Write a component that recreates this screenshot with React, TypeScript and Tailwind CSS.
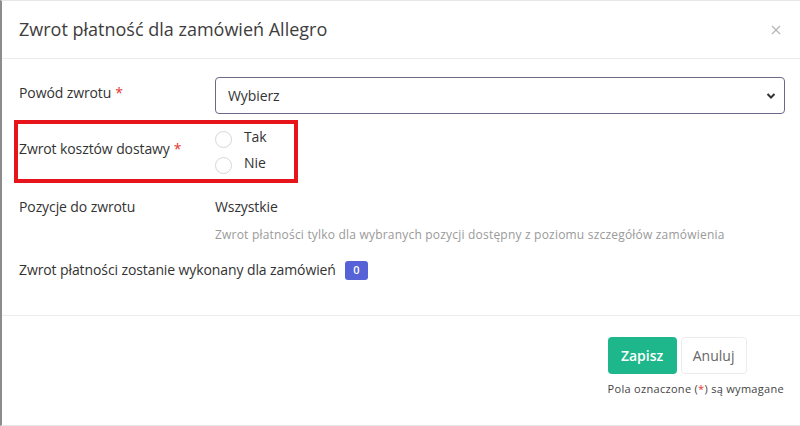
import React from "react";

function Req() {
  return <span className="text-[#e3342f] ml-1">*</span>;
}

function Radio({ label }: { label: string }) {
  return (
    <label className="flex items-center h-[26px]">
      <span className="w-[17px] h-[17px] rounded-full border border-[#d6d6d6] bg-white" />
      <span className="ml-[12px] -mt-[5px]">{label}</span>
    </label>
  );
}

export default function App() {
  return (
    <div
      className="relative w-[800px] h-[426px] bg-white border-l-2 border-l-[#8c8c8c] border-t border-t-[#e6e6e6] border-b border-b-[#e6e6e6] overflow-hidden"
      style={{ fontFamily: '"Open Sans", "Liberation Sans", sans-serif' }}
    >
      <div className="flex items-center justify-between h-[58px] pl-[17px] pr-[19px] border-b border-[#ececec]">
        <h1 className="text-[18px] font-medium text-[#3d3d3d]">
          Zwrot płatność dla zamówień Allegro
        </h1>
        <svg width="10" height="10" viewBox="0 0 10 10" className="mt-[1px]">
          <path d="M1 1L9 9M9 1L1 9" stroke="#b5b5b5" strokeWidth="1.2" />
        </svg>
      </div>

      <div className="pl-[17px] pr-[15px] pt-[18px] h-[257px] border-b border-[#ececec] text-[14px] leading-[20px] tracking-[-0.1px] text-[#333]">
        <div className="flex items-center h-[37px]">
          <div className="w-[196px] -mt-[5px]">
            Powód zwrotu<Req />
          </div>
          <div className="flex-1 h-[37px] flex items-center justify-between border border-[#6c6887] rounded-[4px] pl-[12px] pr-[8px]">
            <span>Wybierz</span>
            <svg width="10" height="8" viewBox="0 0 10 8">
              <path d="M1.5 2L5 5.5L8.5 2" fill="none" stroke="#333" strokeWidth="2" />
            </svg>
          </div>
        </div>

        <div className="flex items-center mt-[12px] h-[52px]">
          <div className="w-[196px] -mt-[7px]">
            Zwrot kosztów dostawy<Req />
          </div>
          <div className="flex flex-col">
            <Radio label="Tak" />
            <Radio label="Nie" />
          </div>
        </div>

        <div className="flex mt-[19px]">
          <div className="w-[196px]">Pozycje do zwrotu</div>
          <div>Wszystkie</div>
        </div>
        <div className="ml-[196px] mt-[9px] text-[12px] leading-[18px] tracking-[0.2px] text-[#9a9a9a]">
          Zwrot płatności tylko dla wybranych pozycji dostępny z poziomu szczegółów zamówienia
        </div>

        <div className="flex items-center mt-[16px]">
          <span>Zwrot płatności zostanie wykonany dla zamówień</span>
          <span className="ml-[9px] w-[23px] h-[19px] rounded-[3px] bg-[#5662d5] text-white text-[11px] font-semibold flex items-center justify-center">
            0
          </span>
        </div>
      </div>

      <div className="flex justify-end pr-[16px] pt-[21px]">
        <div className="flex flex-col items-start">
          <div className="flex gap-[4px]">
            <button className="w-[69px] h-[37px] rounded-[4px] bg-[#1eb78b] text-white text-[14px] font-semibold">
              Zapisz
            </button>
            <button className="w-[66px] h-[37px] rounded-[4px] border border-[#ececec] bg-white text-[#666] text-[14px]">
              Anuluj
            </button>
          </div>
          <div className="mt-[7px] text-[11px] tracking-[0.3px] text-[#444]">
            Pola oznaczone (<span className="text-[#e3342f]">*</span>) są wymagane
          </div>
        </div>
      </div>

      <div className="absolute left-[12px] top-[119px] w-[284px] h-[63px] border-[4px] border-[#e8141c] pointer-events-none" />
    </div>
  );
}
